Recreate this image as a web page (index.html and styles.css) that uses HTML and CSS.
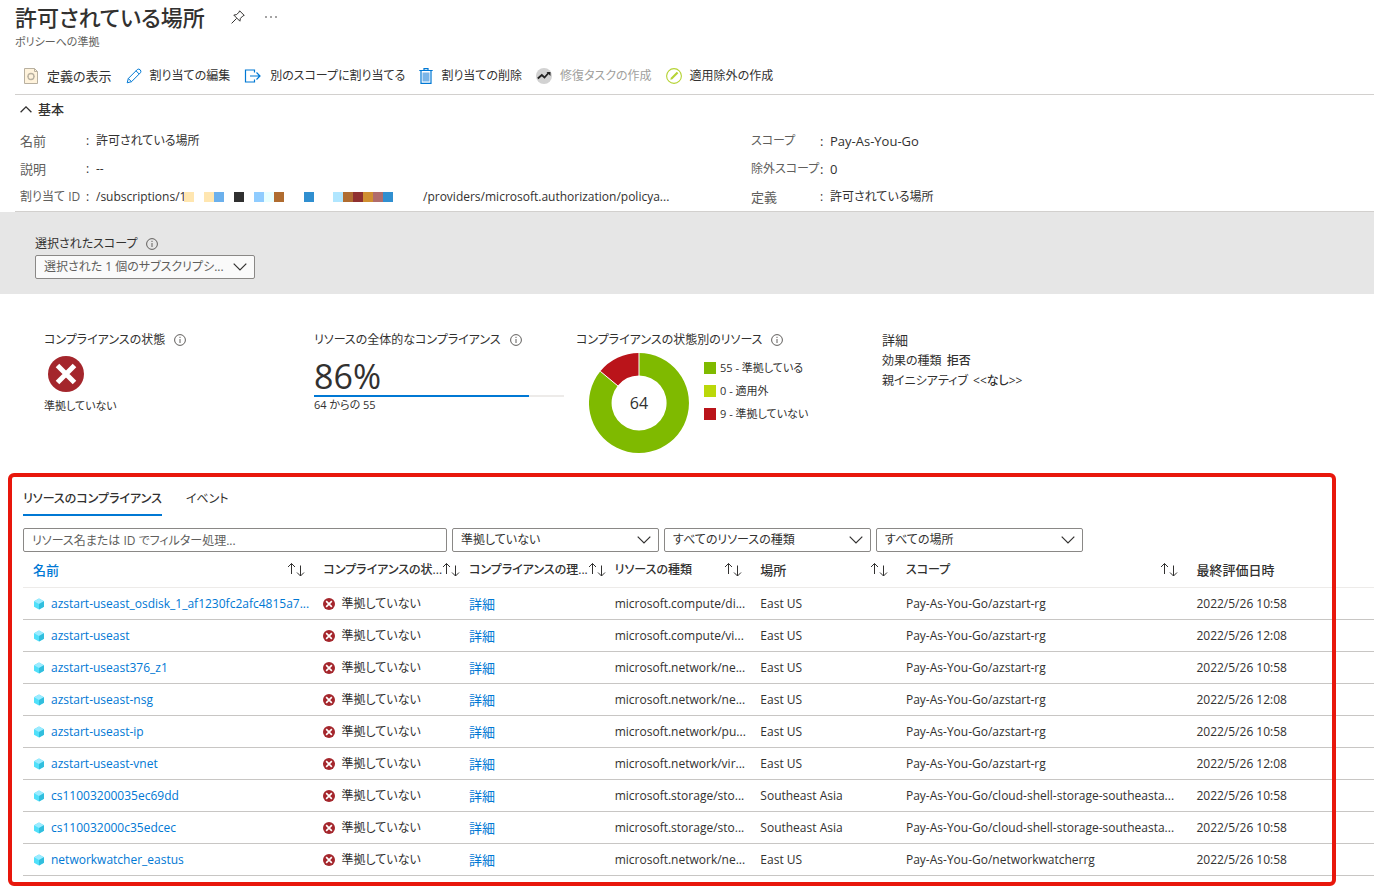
FILE: index.html
```html
<!DOCTYPE html>
<html lang="ja">
<head>
<meta charset="utf-8">
<title>許可されている場所</title>
<link rel="stylesheet" href="styles.css">
</head>
<body>
<svg class="defs" aria-hidden="true">
  <symbol id="info" viewBox="0 0 12 12"><circle cx="6" cy="6" r="5.4" fill="none" stroke="#605e5c"/><path d="M6 5v4M6 2.8v1.2" stroke="#605e5c" fill="none"/></symbol>
  <symbol id="chev" viewBox="0 0 14 8"><path d="M.7.7 7 7 13.300.7" fill="none" stroke="#323130" stroke-width="1.200"/></symbol>
  <symbol id="sort" viewBox="0 0 18 15"><path d="M4.500 12V1.500M1 5l3.500-3.500L8 5M13.500 3.500V14M10 10.500l3.500 3.500 3.500-3.500" fill="none" stroke="#323130"/></symbol>
  <symbol id="cube" viewBox="0 0 12 12"><path d="M6 .5 11 3.200v5.600L6 11.500 1 8.800V3.200z" fill="#50e0fa"/><path d="M6 .5 11 3.200 6 6 1 3.200z" fill="#9cebff"/><path d="M6 6l5-2.800v5.600L6 11.500z" fill="#32bedd"/></symbol>
  <symbol id="fail" viewBox="0 0 36 36"><circle cx="18" cy="18" r="18" fill="#a4262c"/><path d="m9.500 9.500 17 17m0-17-17 17" stroke="#fff" stroke-width="5"/></symbol>
</svg>

<header class="page-head">
  <div class="title-row">
    <h1>許可されている場所</h1>
    <button class="icon-btn" aria-label="ピン留め"><svg width="14" height="14" viewBox="0 0 14 14" fill="none" stroke="#323130"><path d="M8.600.8 13.200 5.400 11.900 5.900 9.400 8.400 8.900 11.200 2.800 5.100 5.600 4.600 8.100 2.100zM5.600 8.400.6 13.400"/></svg></button>
    <button class="icon-btn" aria-label="その他"><svg width="12" height="4" viewBox="0 0 12 4" fill="#323130"><circle cx="1" cy="2" r=".8"/><circle cx="6" cy="2" r=".8"/><circle cx="11" cy="2" r=".8"/></svg></button>
  </div>
  <p class="subtitle">ポリシーへの準拠</p>
</header>

<nav class="toolbar">
  <button class="kanji"><svg width="16" height="16" viewBox="0 0 16 16"><path d="M1.500.5h10l3 3v12h-13z" fill="#fff3dc" stroke="#b8b0a0"/><path d="M11.500.5v3h3" fill="none" stroke="#b8b0a0"/><circle cx="8" cy="8.500" r="3" fill="none" stroke="#b8b0a0" stroke-width="1.300"/><path d="M4.500 8.500h1M10.500 8.500h1M8 5V6M8 11v1" stroke="#b8b0a0"/></svg>定義の表示</button>
  <button><svg width="16" height="16" viewBox="0 0 16 16" fill="none" stroke="#0078d4"><path d="M1.200 14.800 2.300 10.500 11.300 1.500Q12.800.5 14.200 1.800 15.500 3.200 14.500 4.700L5.500 13.700zM10 2.800l3.200 3.200M2.300 10.500l3.200 3.200"/></svg>割り当ての編集</button>
  <button><svg width="18" height="16" viewBox="0 0 18 16" fill="none" stroke="#0078d4" stroke-width="1.200"><path d="M10.500 4.500V2H1.500v12h9v-2.500M6 8h10M12.500 4.500 16 8l-3.500 3.500"/></svg>別のスコープに割り当てる</button>
  <button><svg width="14" height="16" viewBox="0 0 14 16"><path d="M2 2.500h10v12.800H2z" fill="#fff" stroke="#0078d4" stroke-width="1.200"/><path d="M.3 2.500h13.400M5 2.200V.6h4v1.600" fill="none" stroke="#0078d4" stroke-width="1.200"/><path d="M3.500 4.500h7v9h-7z" fill="#7ab5e8"/></svg>割り当ての削除</button>
  <button disabled><svg width="16" height="16" viewBox="0 0 16 16"><circle cx="8" cy="8" r="8" fill="#d2d2d2"/><path d="m1.800 10.500 4-3.500 2.700 2.500L12.500 5" fill="none" stroke="#222" stroke-width="1.800"/><path d="M10.500 4h4v4z" fill="#222"/></svg>修復タスクの作成</button>
  <button><svg width="16" height="16" viewBox="0 0 16 16"><circle cx="8" cy="8" r="7.400" fill="none" stroke="#b5d334" stroke-width="1.100"/><path d="m4.300 11.700.5-2L10.800 3.700l1.500 1.500L6.300 11.200z" fill="#b5d334"/></svg>適用除外の作成</button>
</nav>

<section class="essentials">
  <button class="ess-toggle kanji"><svg width="12" height="7" viewBox="0 0 12 7"><path d="m.6 6.300 5.400-5.400 5.400 5.400" fill="none" stroke="#323130" stroke-width="1.300"/></svg>基本</button>
  <div class="ess-grid">
    <dl>
      <dt class="kanji">名前</dt><dd>許可されている場所</dd>
      <dt class="kanji">説明</dt><dd>--</dd>
      <dt>割り当て ID</dt><dd><span class="sub">/subscriptions/1</span><svg class="mosaic" width="239" height="10" viewBox="0 0 239 10" shape-rendering="crispEdges"><path d="M0 0h10v10H0zM20 0h10v10H20z" fill="#ffe6b0"/><path d="M30 0h10v10H30z" fill="#6bb0ec"/><path d="M50 0h10v10H50z" fill="#303030"/><path d="M70 0h10v10H70z" fill="#8fccff"/><path d="M80 0h10v10H80z" fill="#e8ffff"/><path d="M90 0h10v10H90zM159 0h10v10h-10z" fill="#b06c30"/><path d="M120 0h10v10h-10zM199 0h10v10h-10z" fill="#308fd0"/><path d="M149 0h10v10h-10z" fill="#b0e6ff"/><path d="M169 0h10v10h-10z" fill="#8f3030"/><path d="M179 0h10v10h-10z" fill="#d08f30"/><path d="M189 0h10v10h-10z" fill="#b06c6c"/></svg><span>/providers/microsoft.authorization/policya...</span></dd>
    </dl>
    <dl>
      <dt>スコープ</dt><dd class="large">Pay-As-You-Go</dd>
      <dt>除外スコープ</dt><dd class="large">0</dd>
      <dt class="kanji">定義</dt><dd>許可されている場所</dd>
    </dl>
  </div>
</section>

<section class="scope-band">
  <label for="scope">選択されたスコープ <svg width="12" height="12"><use href="#info"/></svg></label>
  <div class="select scope-select"><select id="scope"><option>選択された 1 個のサブスクリプシ...</option></select><svg width="14" height="8"><use href="#chev"/></svg></div>
</section>

<section class="stats">
  <div>
    <h2>コンプライアンスの状態 <svg width="12" height="12"><use href="#info"/></svg></h2>
    <svg class="big-fail" width="36" height="36"><use href="#fail"/></svg>
    <p class="small">準拠していない</p>
  </div>
  <div>
    <h2>リソースの全体的なコンプライアンス <svg width="12" height="12"><use href="#info"/></svg></h2>
    <p class="percent">86%</p>
    <div class="bar"><span style="width:86%"></span></div>
    <p class="small">64 からの 55</p>
  </div>
  <div>
    <h2>コンプライアンスの状態別のリソース <svg width="12" height="12"><use href="#info"/></svg></h2>
    <div class="chart">
      <svg width="100" height="100" viewBox="0 0 100 100"><path d="M50 0A50 50 0 1 1 11.300 18.300L28.700 32.700A27.500 27.500 0 1 0 50 22.500z" fill="#7fba00"/><path d="M50 0V22.500A27.500 27.500 0 0 0 28.700 32.700L11.300 18.300A50 50 0 0 1 50 0z" fill="#ba141a"/><path d="M50 0V23M11.300 18.300 29 33" stroke="#fff"/><text class="donut-num" x="50" y="56" text-anchor="middle">64</text></svg>
      <ul>
        <li><i class="ok"></i>55 - 準拠している</li>
        <li><i class="na"></i>0 - 適用外</li>
        <li><i class="ng"></i>9 - 準拠していない</li>
      </ul>
    </div>
  </div>
  <div>
    <h2 class="kanji">詳細</h2>
    <div class="details">
      <p>効果の種類 <b>拒否</b></p>
      <p>親イニシアティブ <b>&lt;&lt;なし&gt;&gt;</b></p>
    </div>
  </div>
</section>

<section class="resources">
  <div class="tabs" role="tablist">
    <button role="tab" class="active" aria-selected="true">リソースのコンプライアンス</button>
    <button role="tab" aria-selected="false">イベント</button>
  </div>
  <div class="filters">
    <input type="text" aria-label="フィルター" placeholder="リソース名または ID でフィルター処理...">
    <div class="select"><select aria-label="状態"><option>準拠していない</option></select><svg width="14" height="8"><use href="#chev"/></svg></div>
    <div class="select"><select aria-label="種類"><option>すべてのリソースの種類</option></select><svg width="14" height="8"><use href="#chev"/></svg></div>
    <div class="select"><select aria-label="場所"><option>すべての場所</option></select><svg width="14" height="8"><use href="#chev"/></svg></div>
  </div>
  <table>
    <colgroup><col class="wide"><col class="mid"><col class="mid"><col class="mid"><col class="mid"><col class="wide"><col></colgroup>
    <thead><tr>
      <th class="sorted kanji"><div>名前<svg width="18" height="15"><use href="#sort"/></svg></div></th>
      <th><div>コンプライアンスの状...<svg width="18" height="15"><use href="#sort"/></svg></div></th>
      <th><div>コンプライアンスの理...<svg width="18" height="15"><use href="#sort"/></svg></div></th>
      <th><div>リソースの種類<svg width="18" height="15"><use href="#sort"/></svg></div></th>
      <th class="kanji"><div>場所<svg width="18" height="15"><use href="#sort"/></svg></div></th>
      <th><div>スコープ<svg width="18" height="15"><use href="#sort"/></svg></div></th>
      <th class="kanji"><div>最終評価日時</div></th>
    </tr></thead>
    <tbody>
      <tr><td><a href="#"><svg width="12" height="12"><use href="#cube"/></svg>azstart-useast_osdisk_1_af1230fc2afc4815a7...</a></td><td><span class="state"><svg width="12" height="12"><use href="#fail"/></svg>準拠していない</span></td><td class="kanji"><a href="#">詳細</a></td><td>microsoft.compute/di...</td><td>East US</td><td>Pay-As-You-Go/azstart-rg</td><td>2022/5/26 10:58</td></tr>
      <tr><td><a href="#"><svg width="12" height="12"><use href="#cube"/></svg>azstart-useast</a></td><td><span class="state"><svg width="12" height="12"><use href="#fail"/></svg>準拠していない</span></td><td class="kanji"><a href="#">詳細</a></td><td>microsoft.compute/vi...</td><td>East US</td><td>Pay-As-You-Go/azstart-rg</td><td>2022/5/26 12:08</td></tr>
      <tr><td><a href="#"><svg width="12" height="12"><use href="#cube"/></svg>azstart-useast376_z1</a></td><td><span class="state"><svg width="12" height="12"><use href="#fail"/></svg>準拠していない</span></td><td class="kanji"><a href="#">詳細</a></td><td>microsoft.network/ne...</td><td>East US</td><td>Pay-As-You-Go/azstart-rg</td><td>2022/5/26 10:58</td></tr>
      <tr><td><a href="#"><svg width="12" height="12"><use href="#cube"/></svg>azstart-useast-nsg</a></td><td><span class="state"><svg width="12" height="12"><use href="#fail"/></svg>準拠していない</span></td><td class="kanji"><a href="#">詳細</a></td><td>microsoft.network/ne...</td><td>East US</td><td>Pay-As-You-Go/azstart-rg</td><td>2022/5/26 12:08</td></tr>
      <tr><td><a href="#"><svg width="12" height="12"><use href="#cube"/></svg>azstart-useast-ip</a></td><td><span class="state"><svg width="12" height="12"><use href="#fail"/></svg>準拠していない</span></td><td class="kanji"><a href="#">詳細</a></td><td>microsoft.network/pu...</td><td>East US</td><td>Pay-As-You-Go/azstart-rg</td><td>2022/5/26 10:58</td></tr>
      <tr><td><a href="#"><svg width="12" height="12"><use href="#cube"/></svg>azstart-useast-vnet</a></td><td><span class="state"><svg width="12" height="12"><use href="#fail"/></svg>準拠していない</span></td><td class="kanji"><a href="#">詳細</a></td><td>microsoft.network/vir...</td><td>East US</td><td>Pay-As-You-Go/azstart-rg</td><td>2022/5/26 12:08</td></tr>
      <tr><td><a href="#"><svg width="12" height="12"><use href="#cube"/></svg>cs11003200035ec69dd</a></td><td><span class="state"><svg width="12" height="12"><use href="#fail"/></svg>準拠していない</span></td><td class="kanji"><a href="#">詳細</a></td><td>microsoft.storage/sto...</td><td>Southeast Asia</td><td>Pay-As-You-Go/cloud-shell-storage-southeasta...</td><td>2022/5/26 10:58</td></tr>
      <tr><td><a href="#"><svg width="12" height="12"><use href="#cube"/></svg>cs110032000c35edcec</a></td><td><span class="state"><svg width="12" height="12"><use href="#fail"/></svg>準拠していない</span></td><td class="kanji"><a href="#">詳細</a></td><td>microsoft.storage/sto...</td><td>Southeast Asia</td><td>Pay-As-You-Go/cloud-shell-storage-southeasta...</td><td>2022/5/26 10:58</td></tr>
      <tr><td><a href="#"><svg width="12" height="12"><use href="#cube"/></svg>networkwatcher_eastus</a></td><td><span class="state"><svg width="12" height="12"><use href="#fail"/></svg>準拠していない</span></td><td class="kanji"><a href="#">詳細</a></td><td>microsoft.network/ne...</td><td>East US</td><td>Pay-As-You-Go/networkwatcherrg</td><td>2022/5/26 10:58</td></tr>
    </tbody>
  </table>
</section>
</body>
</html>
```
FILE: styles.css
```css
* { box-sizing: border-box; }
body {
  margin: 0;
  background: #fff;
  color: #323130;
  font: 12px/20px "Open Sans", "Noto Sans CJK JP", sans-serif;
  font-feature-settings: "palt";
  white-space: nowrap;
}
h1, h2, p, dl, dd, ul { margin: 0; padding: 0; }
button, input, select { font: inherit; font-feature-settings: inherit; color: inherit; }
button { border: 0; background: none; padding: 0; white-space: nowrap; }
a { color: #0078d4; text-decoration: none; }
svg { flex: none; }
.defs { position: absolute; width: 0; height: 0; }

.page-head { padding: 2px 15px 0; }
.title-row { display: flex; align-items: center; gap: 26px; height: 30px; }
h1 { font-size: 22px; line-height: 30px; font-weight: 500; }
.icon-btn { display: flex; }
.title-row .icon-btn + .icon-btn { margin-left: -6px; }
.subtitle { font-size: 11px; color: #605e5c; }

.toolbar {
  display: flex;
  gap: 14px;
  height: 43px;
  margin-left: 15px;
  padding: 8px 8px 0;
  border-bottom: 1px solid #d2d0ce;
}
.toolbar button { display: flex; align-items: center; gap: 8px; height: 33px; padding-bottom: 1px; }
.toolbar button:disabled { color: #a19f9d; }

.essentials { margin-left: 15px; padding: 4px 5px 0; border-bottom: 1px solid #d2d0ce; }
.ess-toggle { display: flex; align-items: center; gap: 6px; font-weight: 500; height: 20px; }
.ess-grid { display: grid; grid-template-columns: 731fr 618fr; padding-top: 8px; }
dl { display: grid; grid-template-columns: 66px 1fr; grid-auto-rows: 28px; align-items: center; }
dl + dl { grid-template-columns: 69px 1fr; }
dt { color: #605e5c; }
dd { display: flex; align-items: center; }
dd::before { content: ":"; width: 10px; }
.large { font-size: 13px; }
.sub { width: 88px; }
.mosaic { position: relative; }

.scope-band { background: #e6e6e6; height: 82px; padding: 20px 35px 0; }
.scope-band label, h2 { display: flex; align-items: center; gap: 9px; }
.scope-band label { height: 23px; }
.select { position: relative; height: 24px; }
.select svg { position: absolute; right: 8px; top: 8px; pointer-events: none; }
.select select, .filters input {
  width: 100%;
  height: 24px;
  padding: 0 8px;
  border: 1px solid #8a8886;
  border-radius: 2px;
  background: #fff;
  appearance: none;
}
.scope-select { width: 220px; }
.scope-select select { background: #fafafa; color: #605e5c; }

.stats {
  display: grid;
  grid-template-columns: 270fr 262fr 306fr 492fr;
  height: 179px;
  padding: 36px 0 0 44px;
}
h2 { font-size: 12px; line-height: 20px; font-weight: 400; }
.big-fail { display: block; margin: 6px 4px; }
.small { font-size: 11px; line-height: 16px; }
.percent { font-size: 34px; height: 45px; line-height: 53px; }
.bar { width: 250px; height: 2px; background: #edebe9; }
.bar span { display: block; height: 2px; background: #0078d4; }
.chart { display: flex; gap: 15px; padding: 3px 0 0 13px; }
.donut-num { font-size: 16px; font-weight: 500; fill: #323130; }
ul { list-style: none; padding-top: 3px; }
li { display: flex; align-items: center; gap: 4px; height: 23px; font-size: 11px; }
li i { width: 12px; height: 12px; }
.ok { background: #7fba00; }
.na { background: #bad80a; }
.ng { background: #ba141a; }
.details { padding-top: 1px; }
.details b { font-weight: 500; margin-left: 2px; }

.resources { position: relative; padding: 16px 0 17px 23px; }
.resources::after {
  content: "";
  position: absolute;
  inset: 0 38px 7px 8px;
  border: 4px solid #e8170c;
  border-radius: 6px;
  pointer-events: none;
}
.tabs { display: flex; gap: 24px; }
.tabs button { height: 27px; padding-bottom: 7px; border-bottom: 2px solid transparent; }
.tabs .active { border-color: #0078d4; font-weight: 500; }
.filters { display: grid; grid-template-columns: 424px 207px 207px 207px; gap: 5px; padding-top: 12px; }
.filters input::placeholder { color: #605e5c; opacity: 1; }

table { width: 100%; table-layout: fixed; border-collapse: collapse; }
.wide { width: 21.5%; }
.mid { width: 10.78%; }
th, td { text-align: left; padding: 1px 0 0 10px; }
th { height: 35px; font-weight: 500; border-bottom: 1px solid #edebe9; }
th div { display: flex; align-items: center; justify-content: space-between; padding-right: 8px; }
.sorted { color: #0078d4; }
td { height: 32px; border-bottom: 1px solid #c8c6c4; }
td a, .state { display: flex; align-items: center; gap: 6px; }

.kanji { font-size: 13px; }
```
